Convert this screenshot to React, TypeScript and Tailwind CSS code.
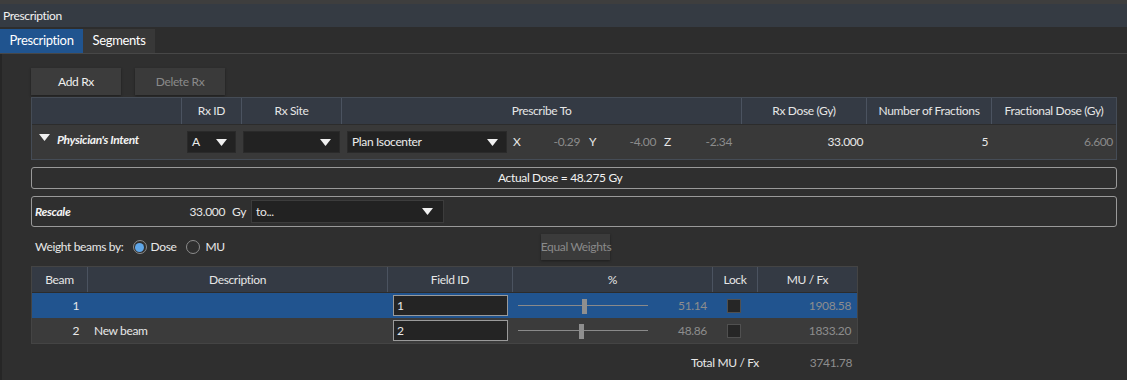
import React from "react";

const font = { fontFamily: "Lato, 'Open Sans', sans-serif", letterSpacing: "-0.35px" };

function Caret({ className = "" }: { className?: string }) {
  return (
    <svg width="11" height="7" viewBox="0 0 11 7" className={className} aria-hidden>
      <path d="M0 0 H11 L5.5 7 Z" fill="#f0f0f0" />
    </svg>
  );
}

function Dropdown({ value, width }: { value: string; width: string }) {
  return (
    <div className={`flex h-[22px] items-center justify-between bg-[#222222] border border-[#2a2a2a] pl-[4px] pr-[8px] ${width}`}>
      <span className="text-[12px] text-[#ececec]">{value}</span>
      <Caret />
    </div>
  );
}

function HeaderCell({ children, last }: { children?: React.ReactNode; last?: boolean }) {
  return (
    <div
      className={`flex h-full items-center justify-center text-[12px] text-[#e6e6e6] ${last ? "" : "border-r border-[#4b5360]"}`}
    >
      {children}
    </div>
  );
}

function Slider({ pos }: { pos: number }) {
  return (
    <div className="relative h-[16px] w-[130px]">
      <div className="absolute left-0 right-0 top-[7px] h-px bg-[#8a8a8a]" />
      <div className="absolute top-[1px] h-[15px] w-[5px] bg-[#8f8f8f]" style={{ left: pos }} />
    </div>
  );
}

const beams = [
  { n: "1", desc: "", id: "1", pos: 64, pct: "51.14", mu: "1908.58", selected: true },
  { n: "2", desc: "New beam", id: "2", pos: 61, pct: "48.86", mu: "1833.20", selected: false },
];

export default function App() {
  return (
    <div className="flex h-[380px] w-[1127px] flex-col overflow-hidden bg-[#2f2f2f] text-[#e8e8e8]" style={font}>
      <div className="h-[4px] bg-[#3e3e3e]" />
      <div className="flex h-[23px] items-center bg-[#353b43] px-[3px] text-[12px] text-[#f2f2f2]">Prescription</div>
      <div className="flex h-[27px] items-end border-b border-[#474747] bg-[#2d2d2d]">
        <div className="flex h-[24px] w-[83px] items-center justify-center bg-[#20548f] text-[13px] text-white">Prescription</div>
        <div className="flex h-[24px] w-[72px] items-center justify-center bg-[#383838] text-[13px] text-white">Segments</div>
      </div>

      <div className="flex flex-1 flex-col border-l-2 border-[#262626] pl-[29px] pr-[10px]">
        <div className="mt-[14px] flex gap-[14px]">
          <button className="h-[27px] w-[90px] bg-[#3c3c3c] text-[12px] text-[#f0f0f0] shadow-[0_1px_2px_#1e1e1e]">Add Rx</button>
          <button className="h-[27px] w-[90px] bg-[#3a3a3a] text-[12px] text-[#8a8a8a] shadow-[0_1px_2px_#1e1e1e]">Delete Rx</button>
        </div>

        <div className="mt-[2px] border border-[#454c56]">
          <div className="grid h-[26px] grid-cols-[150px_60px_100px_400px_125px_125px_124px] bg-[#343a44]">
            <HeaderCell />
            <HeaderCell>Rx ID</HeaderCell>
            <HeaderCell>Rx Site</HeaderCell>
            <HeaderCell>Prescribe To</HeaderCell>
            <HeaderCell>Rx Dose (Gy)</HeaderCell>
            <HeaderCell>Number of Fractions</HeaderCell>
            <HeaderCell last>Fractional Dose (Gy)</HeaderCell>
          </div>
          <div className="grid h-[35px] grid-cols-[150px_60px_100px_400px_125px_125px_124px] border-t border-[#2c2c2c] bg-[#393939] text-[12px]">
            <div className="flex items-start gap-[7px] pl-[7px] pt-[6px]">
              <Caret className="mt-[3px]" />
              <span className="font-bold italic text-[#f2f2f2]">Physician's Intent</span>
            </div>
            <div className="pl-[5px] pt-[6px]">
              <Dropdown value="A" width="w-[49px]" />
            </div>
            <div className="pl-[1px] pt-[6px]">
              <Dropdown value="" width="w-[97px]" />
            </div>
            <div className="flex items-start pl-[5px] pt-[6px]">
              <Dropdown value="Plan Isocenter" width="w-[160px]" />
              <div className="flex h-[22px] items-center">
                <span className="ml-[6px] w-[14px]">X</span>
                <span className="w-[53px] text-right text-[#8c8c8c]">-0.29</span>
                <span className="ml-[9px] w-[14px]">Y</span>
                <span className="w-[53px] text-right text-[#8c8c8c]">-4.00</span>
                <span className="ml-[8px] w-[14px]">Z</span>
                <span className="w-[54px] text-right text-[#8c8c8c]">-2.34</span>
              </div>
            </div>
            <div className="mt-[6px] flex h-[22px] items-center justify-end pr-[4px]">33.000</div>
            <div className="mt-[6px] flex h-[22px] items-center justify-end pr-[4px]">5</div>
            <div className="mt-[6px] flex h-[22px] items-center justify-end pr-[3px] text-[#8a8a8a]">6.600</div>
          </div>
        </div>

        <div className="mt-[7px] flex h-[22px] items-center rounded-[3px] border border-[#9a9a9a] pl-[466px] text-[12px] text-[#f2f2f2]">
          Actual Dose = 48.275 Gy
        </div>

        <div className="mt-[7px] flex h-[31px] items-center rounded-[3px] border border-[#9a9a9a] text-[12px]">
          <span className="ml-[3px] w-[120px] font-bold italic text-[#f4f4f4]">Rescale</span>
          <span className="w-[70px] text-right">33.000</span>
          <span className="ml-[7px] w-[19px]">Gy</span>
          <div className="flex h-[23px] w-[193px] items-center justify-between border border-[#3c3c3c] bg-[#222222] pl-[4px] pr-[10px]">
            <span>to...</span>
            <Caret />
          </div>
        </div>

        <div className="mt-[7px] flex h-[26px] items-center text-[12px]">
          <span className="ml-[4px]">Weight beams by:</span>
          <span className="ml-[9px] flex h-[14px] w-[14px] items-center justify-center rounded-full border border-[#8c8c8c]">
            <span className="h-[9px] w-[9px] rounded-full bg-[#5fa6e8]" />
          </span>
          <span className="ml-[4px]">Dose</span>
          <span className="ml-[10px] h-[14px] w-[14px] rounded-full border border-[#8c8c8c]" />
          <span className="ml-[5px]">MU</span>
          <button className="ml-[316px] h-[26px] w-[69px] whitespace-nowrap bg-[#3b3b3b] text-[12px] text-[#8a8a8a] shadow-[0_1px_2px_#1e1e1e]">
            Equal Weights
          </button>
        </div>

        <div className="mt-[6px] w-[827px] border border-[#444444] text-[12px]">
          <div className="grid h-[26px] grid-cols-[56px_300px_125px_200px_45px_99px] border-b border-[#2c2c2c] bg-[#343a44]">
            <HeaderCell>Beam</HeaderCell>
            <HeaderCell>Description</HeaderCell>
            <HeaderCell>Field ID</HeaderCell>
            <HeaderCell>%</HeaderCell>
            <HeaderCell>Lock</HeaderCell>
            <HeaderCell last>MU / Fx</HeaderCell>
          </div>
          {beams.map((b) => (
            <div
              key={b.n}
              className={`grid h-[25px] grid-cols-[56px_300px_125px_200px_45px_99px] ${b.selected ? "bg-[#21548f]" : "bg-[#3b3b3b]"}`}
            >
              <div className="flex items-center justify-end pr-[9px]">{b.n}</div>
              <div className="flex items-center pl-[6px]">{b.desc}</div>
              <div className="flex items-center pl-[5px]">
                <div className="flex h-[21px] w-[115px] items-center border border-[#9a9a9a] bg-[#242424] pl-[3px] text-[12px]">{b.id}</div>
              </div>
              <div className="flex items-center pl-[5px]">
                <Slider pos={b.pos} />
                <span className="w-[59px] text-right text-[#8d8d8d]">{b.pct}</span>
              </div>
              <div className="flex items-center pl-[14px]">
                <span className="h-[14px] w-[14px] border border-[#505050] bg-[#262626]" />
              </div>
              <div className="flex items-center justify-end pr-[6px] text-[#8d8d8d]">{b.mu}</div>
            </div>
          ))}
        </div>

        <div className="mt-[10px] flex w-[827px] items-center text-[12px]">
          <span className="ml-[660px]">Total MU / Fx</span>
          <span className="ml-auto pr-[6px] text-[#8d8d8d]">3741.78</span>
        </div>
      </div>
    </div>
  );
}
